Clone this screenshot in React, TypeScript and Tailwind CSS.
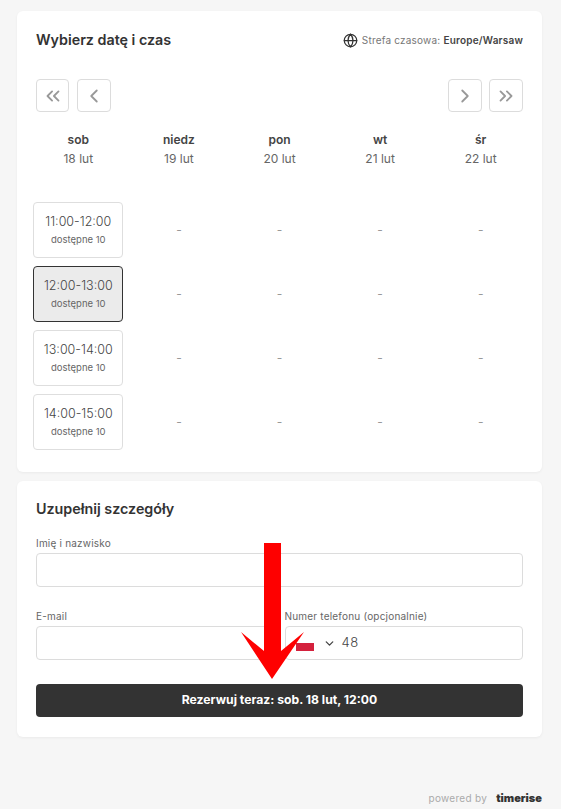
import { ChevronDown, ChevronLeft, ChevronRight, ChevronsLeft, ChevronsRight, Globe } from 'lucide-react';

const days = [
  { name: 'sob', date: '18 lut' },
  { name: 'niedz', date: '19 lut' },
  { name: 'pon', date: '20 lut' },
  { name: 'wt', date: '21 lut' },
  { name: 'śr', date: '22 lut' },
];

const slots = ['11:00-12:00', '12:00-13:00', '13:00-14:00', '14:00-15:00'];

function NavButton({ children, className }: { children: React.ReactNode; className: string }) {
  return (
    <button className={`flex h-[33px] items-center justify-center rounded-[4px] border border-[#dcdcdc] bg-white text-[#999999] ${className}`}>
      {children}
    </button>
  );
}

function Slot({ time, selected }: { time: string; selected: boolean }) {
  return (
    <div
      className={`flex h-14 w-[90px] flex-col items-center justify-center rounded-[4px] border ${
        selected ? 'border-[#333333] bg-[#ebebeb]' : 'border-[#dedede] bg-white'
      }`}
    >
      <span className="text-[12.5px] leading-5 font-light text-[#444444]">{time}</span>
      <span className="text-[9.5px] leading-4 text-[#666666]">dostępne 10</span>
    </div>
  );
}

function Field({ label, children }: { label: string; children?: React.ReactNode }) {
  return (
    <label className="block min-w-0 flex-1">
      <span className="block text-[10px] leading-[14px] tracking-[0.2px] text-[#666666]">{label}</span>
      <div className="mt-[3px] flex h-[34px] items-center rounded-[4px] border border-[#dcdcdc] bg-white">{children}</div>
    </label>
  );
}

export default function App() {
  return (
    <div className="relative flex h-[809px] flex-col overflow-hidden bg-[#f6f6f6] pt-[11px] pr-[19px] pl-[17px] font-['Inter',sans-serif]">
      <section className="h-[461px] rounded-md bg-white px-[19px] pt-5 shadow-[0_1px_3px_rgba(0,0,0,0.05)]">
        <header className="flex h-[18px] items-center justify-between">
          <h2 className="text-[14.3px] font-semibold text-[#333333]">Wybierz datę i czas</h2>
          <div className="flex items-center gap-[4px] text-[10px] tracking-[0.2px] text-[#777777]">
            <Globe size={15} strokeWidth={2} className="text-[#333333]" />
            <span>
              Strefa czasowa: <b className="font-semibold text-[#444444]">Europe/Warsaw</b>
            </span>
          </div>
        </header>

        <nav className="mt-[30px] flex items-center">
          <NavButton className="w-[33px]"><ChevronsLeft size={22} strokeWidth={2} /></NavButton>
          <NavButton className="ml-2 w-[34px]"><ChevronLeft size={22} strokeWidth={2} /></NavButton>
          <div className="flex-1" />
          <NavButton className="w-[34px]"><ChevronRight size={22} strokeWidth={2} /></NavButton>
          <NavButton className="ml-[7px] w-[34px]"><ChevronsRight size={22} strokeWidth={2} /></NavButton>
        </nav>

        <div className="mx-[-8px] mt-[18px] grid grid-cols-5">
          {days.map((day, i) => (
            <div key={day.name} className="flex flex-col items-center">
              <div className="h-[72px] text-center">
                <div className="text-xs leading-5 font-semibold text-[#444444]">{day.name}</div>
                <div className="text-xs leading-[18px] text-[#666666]">{day.date}</div>
              </div>
              <div className="flex flex-col gap-2">
                {slots.map((time, j) =>
                  i === 0 ? (
                    <Slot key={time} time={time} selected={j === 1} />
                  ) : (
                    <div key={time} className="flex h-14 items-center justify-center text-xs text-[#999999]">
                      -
                    </div>
                  ),
                )}
              </div>
            </div>
          ))}
        </div>
      </section>

      <section className="mt-[9px] h-[256px] rounded-md bg-white px-[19px] pt-[19px] shadow-[0_1px_3px_rgba(0,0,0,0.05)]">
        <h2 className="text-[14.3px] leading-[18px] font-semibold text-[#333333]">Uzupełnij szczegóły</h2>
        <div className="mt-[18px]">
          <Field label="Imię i nazwisko" />
        </div>
        <div className="mt-[22px] flex gap-[10px]">
          <Field label="E-mail" />
          <Field label="Numer telefonu (opcjonalnie)">
            <div className="ml-[10px] flex h-[15px] w-[18px] flex-col">
              <div className="h-[7.5px] bg-white" />
              <div className="h-[7.5px] bg-[#d4213d]" />
            </div>
            <ChevronDown size={13} strokeWidth={2.4} className="ml-[9px] text-[#444444]" />
            <span className="ml-[6px] text-[13px] font-light tracking-[0.5px] text-[#444444]">48</span>
          </Field>
        </div>
        <button className="mt-6 flex h-[33px] w-full items-center justify-center rounded-[4px] bg-[#333333] text-[12.2px] font-bold text-white">
          Rezerwuj teraz: sob. 18 lut, 12:00
        </button>
      </section>

      <footer className="mt-[53px] flex items-center justify-end gap-[9px]">
        <span className="text-[10px] tracking-[0.3px] text-[#aaaaaa]">powered by</span>
        <span className="text-[11px] font-black text-[#333333]">timerise</span>
      </footer>

      {/* red arrow drawn over the form */}
      <svg className="absolute top-[540px] left-[238px]" width="70" height="142" viewBox="0 0 70 142">
        <path d="M26 3h17v108l23-19-32 47L3 92l23 19z" fill="#fe0000" />
      </svg>
    </div>
  );
}
